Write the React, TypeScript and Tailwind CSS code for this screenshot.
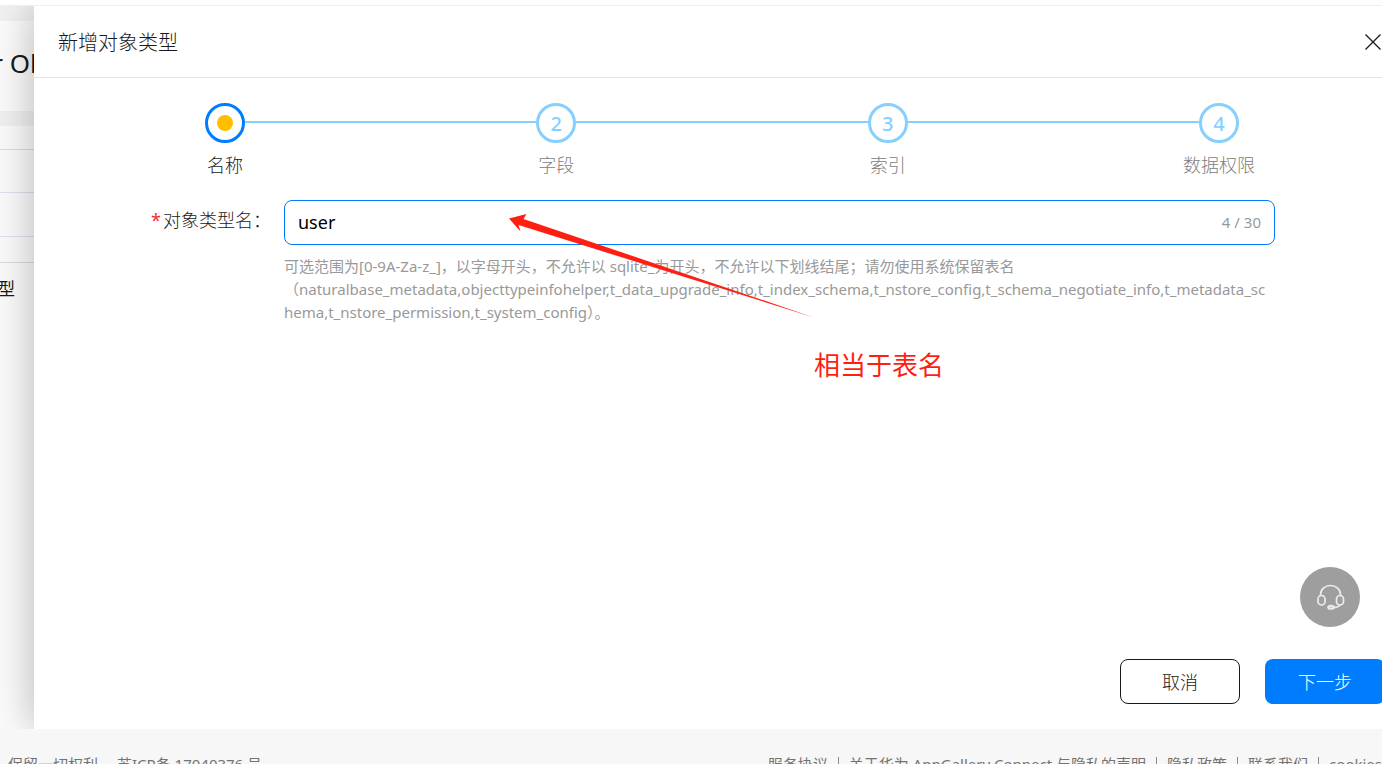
import { Fragment, useState } from "react"

const steps = [
  { title: "名称", active: true },
  { title: "字段", active: false },
  { title: "索引", active: false },
  { title: "数据权限", active: false },
]

const footerLinks = ["服务协议", "关于华为 AppGallery Connect 与隐私的声明", "隐私政策", "联系我们", "cookies"]

const Backdrop = () => {
  return (
    <div className="w-[34px] shrink-0 bg-[#fbfbfb] text-[#191919]">
      <div className="h-[15px] bg-[#f1f1f1]" />
      <div className="flex h-[90px] justify-end whitespace-nowrap pt-6 text-[26px] leading-9">
        <span className="-mr-3">r Ob</span>
      </div>
      <div className="h-[15px] bg-[#f0f0f0]" />
      <div className="h-6 border-b border-[#dcdcdc]" />
      <div className="h-[43px] border-b border-[#dbe0ea]" />
      <div className="h-11 border-b border-[#dbe0ea]" />
      <div className="h-[26px] border-b border-[#dcdcdc]" />
      <div className="flex w-[15px] justify-end whitespace-nowrap pt-3 text-[17px] leading-7">类型</div>
    </div>
  )
}

const Steps = () => {
  return (
    <ol className="flex pl-[151px] pr-[126px] pt-[25px]">
      {steps.map((step, index) => (
        <Fragment key={step.title}>
          {index > 0 && <li aria-hidden="true" className="-mx-5 mt-[18px] h-0.5 flex-1 bg-[#86d0ff]" />}
          <li className="flex w-20 flex-col items-center">
            {step.active ? (
              <span className="flex size-10 items-center justify-center rounded-full border-3 border-[#007dff]">
                <span className="size-4 rounded-full bg-[#ffbf00]" />
              </span>
            ) : (
              <span className="flex size-10 items-center justify-center rounded-full border-3 border-[#86d0ff] pt-0.5 text-xl font-medium text-[#86d0ff]">
                {index + 1}
              </span>
            )}
            <span
              className={
                step.active
                  ? "mt-2 whitespace-nowrap text-lg font-light text-[#191919]"
                  : "mt-2 whitespace-nowrap text-lg font-light text-[#808080]"
              }
            >
              {step.title}
            </span>
          </li>
        </Fragment>
      ))}
    </ol>
  )
}

const HeadsetIcon = () => {
  return (
    <svg width="30" height="30" viewBox="0 0 30 30" fill="none" stroke="#ececec" strokeWidth="1.700">
      <path d="M5.500 13.500v-1a10 9 0 0 1 20 0v1" />
      <rect x="3" y="13.500" width="7" height="9.500" rx="3.500" />
      <rect x="21.500" y="13.500" width="7" height="9.500" rx="3.500" />
      <path d="M25 23c-1.500 1.800-3 2.500-6 2.500" />
      <ellipse cx="16" cy="25.300" rx="3" ry="1.700" fill="#d0d0d0" />
    </svg>
  )
}

const App = () => {
  const [name, setName] = useState("user")

  return (
    <div className="relative flex h-screen flex-col overflow-hidden bg-white font-['Noto_Sans','Noto_Sans_CJK_SC',sans-serif]">
      <div className="h-1.5 shrink-0 border-b border-[#efefef]" />
      <div className="flex flex-1 overflow-hidden">
        <Backdrop />
        <section
          role="dialog"
          aria-labelledby="dialog-title"
          className="relative -mr-[3px] flex flex-1 flex-col bg-white shadow-[0_0_40px_rgba(0,0,0,0.28)]"
        >
          <header className="flex h-[72px] items-center justify-between border-b border-[#e4e4e4] pl-6 pr-1">
            <h1 id="dialog-title" className="pt-[3px] text-xl font-light text-[#191919]">
              新增对象类型
            </h1>
            <button type="button" aria-label="关闭">
              <svg width="16" height="16" viewBox="0 0 16 16" stroke="#191919" strokeWidth="1.300">
                <path d="M0.500 0.500l15 15M15.500 0.500l-15 15" />
              </svg>
            </button>
          </header>

          <Steps />

          <div className="flex pl-[117px] pr-[110px] pt-[21px]">
            <label htmlFor="type-name" className="w-[133px] shrink-0 pt-1.5 text-lg font-light text-[#191919]">
              <span className="mr-0.5 font-normal text-[#fa2a2d]">*</span>
              对象类型名：
            </label>
            <div className="min-w-0 flex-1">
              <div className="flex h-[45px] items-center rounded-lg border border-[#007dff] px-[13px]">
                <input
                  id="type-name"
                  value={name}
                  maxLength={30}
                  onChange={(e) => setName(e.target.value)}
                  className="min-w-0 flex-1 pb-0.5 text-lg text-black outline-none"
                />
                <span className="text-[15px] text-[#999999]">{name.length} / 30</span>
              </div>
              <p className="mt-2.5 break-all text-[15px] leading-[23px] text-[#999999]">
                可选范围为[0-9A-Za-z_]，以字母开头，不允许以 sqlite_为开头，不允许以下划线结尾；请勿使用系统保留表名
                <br />
                （naturalbase_metadata,objecttypeinfohelper,t_data_upgrade_info,t_index_schema,t_nstore_config,t_schema_negotiate_info,t_metadata_sc
                <br />
                hema,t_nstore_permission,t_system_config）。
              </p>
            </div>
          </div>

          <div className="mt-auto flex justify-end gap-[25px] pb-[25px] text-lg">
            <button type="button" className="h-[45px] w-[120px] rounded-lg border border-[#191919] font-light text-[#191919]">
              取消
            </button>
            <button type="button" className="h-[45px] w-[120px] rounded-lg bg-[#007dff] font-light text-white">
              下一步
            </button>
          </div>
        </section>
      </div>

      <footer className="flex h-[35px] shrink-0 justify-between overflow-hidden whitespace-nowrap bg-[#f7f7f7] pl-2 pt-6 text-[15px] leading-[22px] text-[#737373]">
        <p>
          保留一切权利
          <a href="#icp" className="ml-[19px]">
            苏ICP备 17040376 号
          </a>
        </p>
        <nav className="flex">
          {footerLinks.map((link, index) => (
            <Fragment key={link}>
              {index > 0 && <span className="mx-2.5 mt-1 h-4 w-px bg-[#8c8c8c]" />}
              <a href="#legal">{link}</a>
            </Fragment>
          ))}
        </nav>
      </footer>

      <button
        type="button"
        aria-label="在线客服"
        className="absolute bottom-[137px] right-[22px] flex size-[60px] items-center justify-center rounded-full bg-[#9e9e9e]"
      >
        <HeadsetIcon />
      </button>

      {/* annotation drawn over the form */}
      <svg className="pointer-events-none absolute left-[508px] top-[212px]" width="310" height="108" viewBox="508 212 310 108">
        <path fill="#ff1f12" d="M509 218.500L526.500 214L523.500 219L814 317.500L518.500 225L520.500 231.500Z" />
      </svg>
      <p className="absolute left-[814px] top-[346px] text-[26px] leading-[38px] text-[#ff1f12]">相当于表名</p>
    </div>
  )
}

export default App
